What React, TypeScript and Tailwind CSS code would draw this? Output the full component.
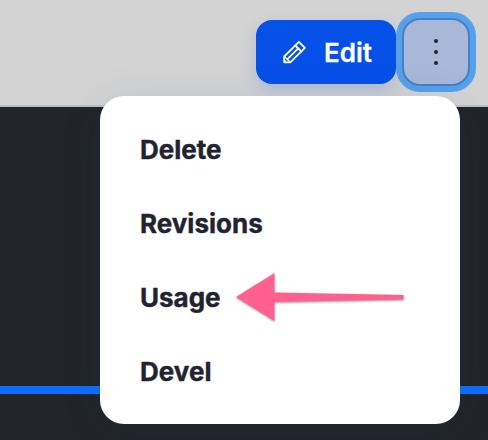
const items = ['Delete', 'Revisions', 'Usage', 'Devel'];

function PencilIcon() {
  return (
    <svg
      className="h-6 w-6 shrink-0"
      viewBox="0 0 24 24"
      fill="none"
      stroke="white"
      strokeWidth="1.8"
      strokeLinejoin="round"
      strokeLinecap="round"
    >
      <path d="M16.9 1.9 22.9 7.9 8.3 22.3H2.2V16.5Z" />
      <path d="M13.3 5.5 19.3 11.5" />
      <path d="M16.2 8.4 5.4 19.2" />
      <path d="M2.4 16.5 8.2 22.2" strokeWidth="1.3" />
      <path d="M2.2 20.2 4.3 22.3" strokeWidth="1.3" />
    </svg>
  );
}

function Arrow() {
  return (
    <svg
      className="absolute left-[120px] top-[168px] h-[66px] w-[200px] drop-shadow-[0_1px_1px_rgba(0,0,0,0.4)]"
      viewBox="220 264 200 66"
      fill="#ff6090"
    >
      <path d="M236 297 274.5 273V292.5L403.5 295V299.5L274.5 302V321Z" />
    </svg>
  );
}

export default function App() {
  return (
    <div className="relative flex h-[440px] w-[488px] flex-col overflow-hidden bg-[#212529] font-['Inter',sans-serif]">
      <header className="flex h-[107px] shrink-0 items-start justify-end gap-1.5 border-b-2 border-[#bfbfbf] bg-[#d3d3d3] pr-[18px] pt-[18px]">
        <button className="mt-0.5 flex h-16 w-[140px] items-center rounded-2xl bg-[#0550e6] pl-[26px] text-[26px] font-semibold text-white shadow-[0_6px_16px_rgba(5,80,230,0.18)] [-webkit-text-stroke:0.3px_white]">
          <PencilIcon />
          <span className="ml-[18px]">Edit</span>
        </button>
        <button
          aria-label="More actions"
          className="flex h-[68px] w-[68px] flex-col items-center justify-center gap-[6.7px] rounded-[18px] border-2 border-[#4482c1] bg-[#a9b7d9] shadow-[0_0_0_6px_#56a1ec]"
        >
          <span className="size-1 rounded-full bg-[#222330]" />
          <span className="size-1 rounded-full bg-[#222330]" />
          <span className="size-1 rounded-full bg-[#222330]" />
        </button>
      </header>
      <main className="h-[279px] shrink-0 bg-[#212529]" />
      <div className="h-2 shrink-0 bg-[#0d6efd]" />
      <footer className="flex-1 bg-[#212529]" />
      <nav className="absolute left-[100px] top-24 flex h-[328px] w-[360px] flex-col rounded-3xl bg-white py-4 pl-10 text-[26px] font-bold text-[#222330] shadow-[0_4px_40px_rgba(30,60,120,0.1)] [-webkit-text-stroke:0.4px_#222330]">
        {items.map((item) => (
          <a key={item} className="flex h-[74px] items-center">
            {item}
          </a>
        ))}
        <Arrow />
      </nav>
    </div>
  );
}
